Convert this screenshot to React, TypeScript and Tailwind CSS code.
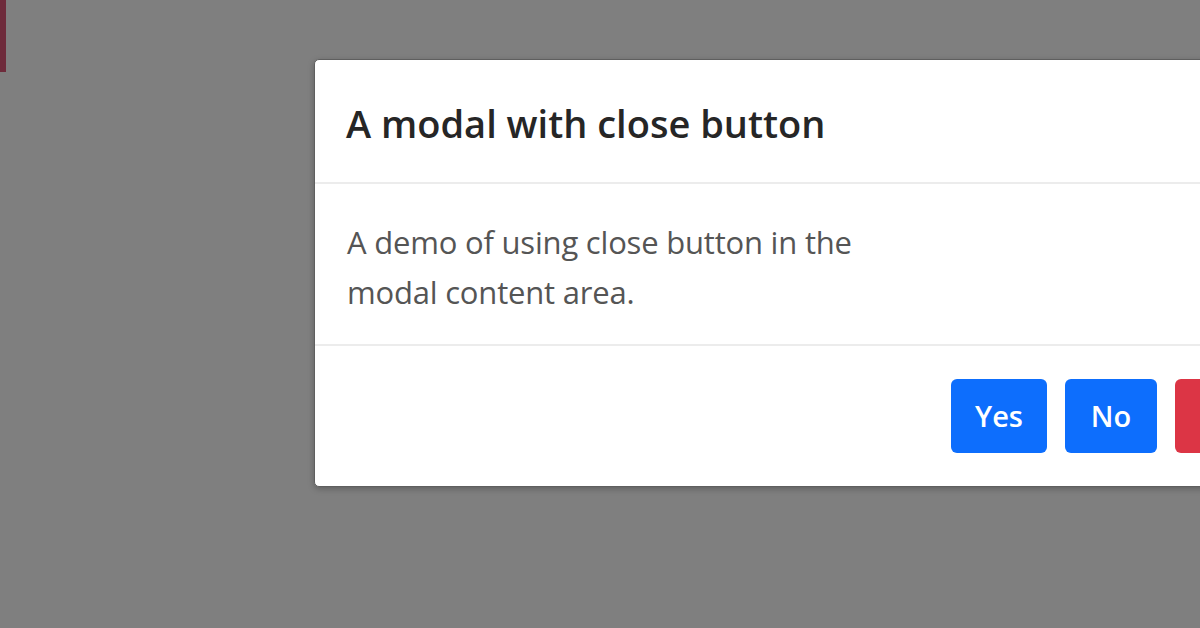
import React from "react";

export default function App() {
  return (
    <div
      className="relative w-[1200px] h-[628px] overflow-hidden bg-[#7f7f7f]"
      style={{ fontFamily: '"Open Sans", "Noto Sans", Arial, sans-serif' }}
    >
      <div className="absolute left-0 top-0 w-[6px] h-[72px] bg-[#6e2b3b]" />
      <div className="pl-[314px] pt-[59px]">
        <div className="w-[1062px] bg-white rounded-[5px] border border-[#5f5f5f] shadow-[0_2px_6px_rgba(0,0,0,0.25)]">
          <div className="h-[124px] flex items-center px-[31px] pt-[3px] border-b-2 border-[#ececec]">
            <h5 className="text-[38px] font-semibold text-[#262626] leading-[46px]">
              A modal with close button
            </h5>
          </div>
          <div className="px-[32px] pt-[33px] pb-[27px] border-b-2 border-[#ececec]">
            <p className="text-[31px] leading-[50px] text-[#555555] tracking-[-0.2px]">
              A demo of using close button in the
              <br />
              modal content area.
            </p>
          </div>
          <div className="flex justify-end gap-[18px] px-[30px] pt-[33px] pb-[33px]">
            <button className="w-[96px] h-[74px] rounded-[6px] bg-[#0d6efd] text-white text-[29px] font-semibold">
              Yes
            </button>
            <button className="w-[92px] h-[74px] rounded-[6px] bg-[#0d6efd] text-white text-[29px] font-semibold">
              No
            </button>
            <button className="w-[170px] h-[74px] rounded-[6px] bg-[#dc3545] text-white text-[29px] font-semibold pl-[40px]">
              Close
            </button>
          </div>
        </div>
      </div>
    </div>
  );
}
